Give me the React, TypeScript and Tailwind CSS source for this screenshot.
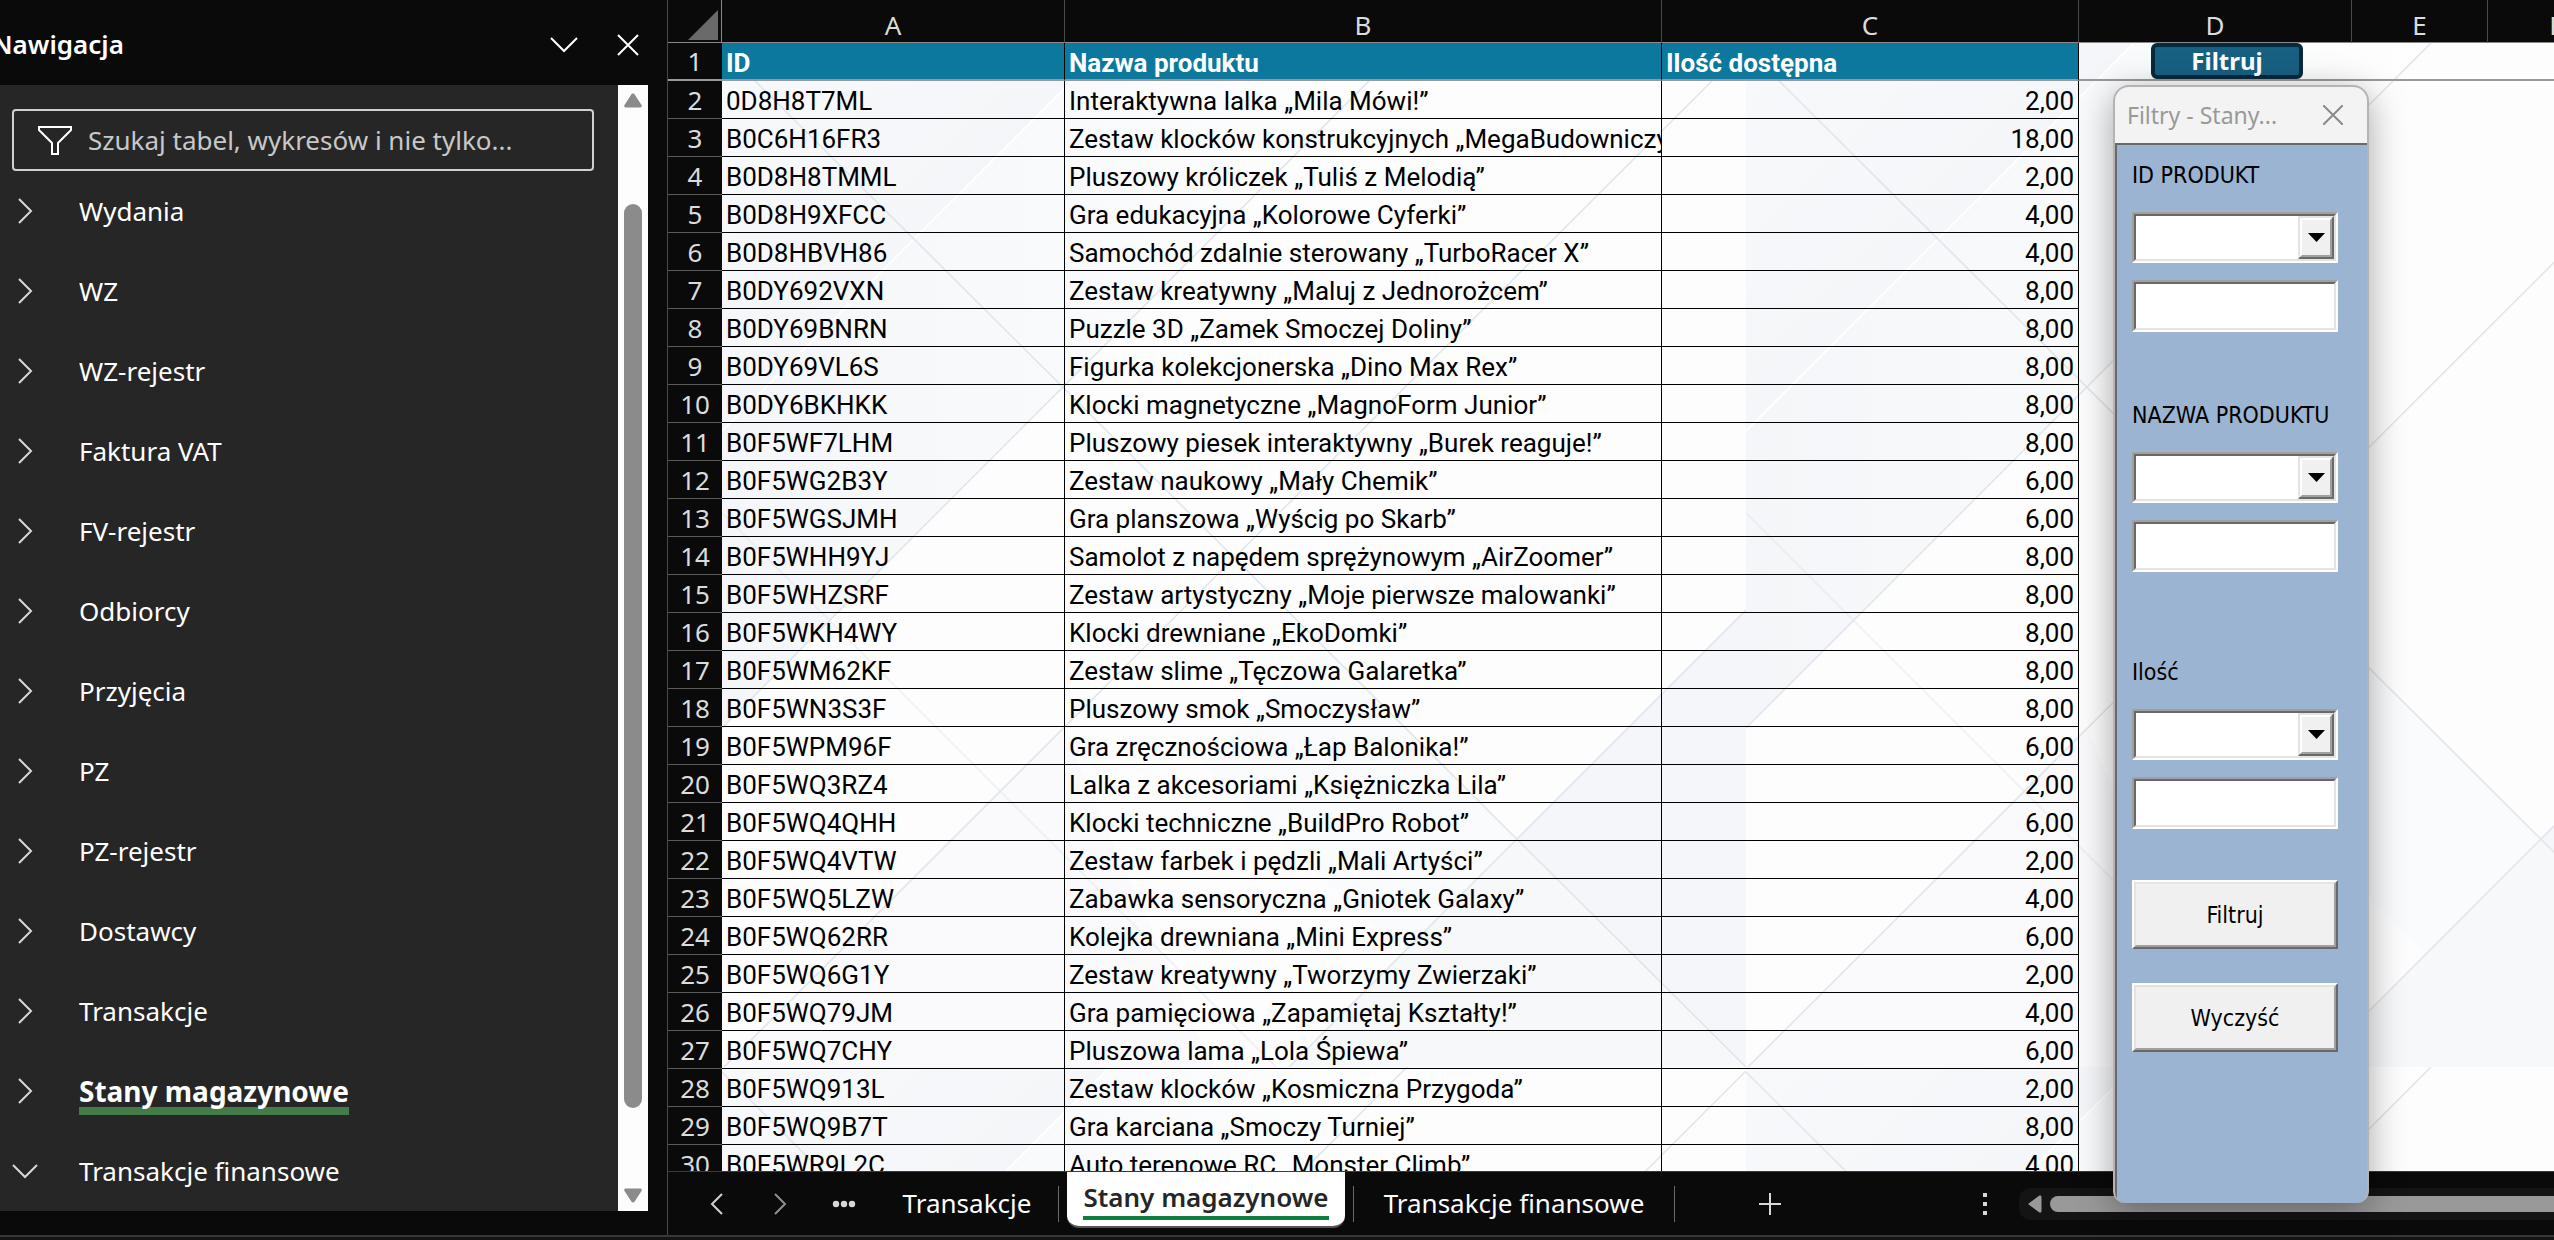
import { useState } from "react";

interface Product {
  id: string;
  name: string;
  qty: string;
}

const NAV_ITEMS = [
  "Wydania",
  "WZ",
  "WZ-rejestr",
  "Faktura VAT",
  "FV-rejestr",
  "Odbiorcy",
  "Przyjęcia",
  "PZ",
  "PZ-rejestr",
  "Dostawcy",
  "Transakcje",
  "Stany magazynowe",
  "Transakcje finansowe",
];

const PRODUCTS: Product[] = [
  { id: "0D8H8T7ML", name: "Interaktywna lalka „Mila Mówi!”", qty: "2,00" },
  { id: "B0C6H16FR3", name: "Zestaw klocków konstrukcyjnych „MegaBudowniczy”", qty: "18,00" },
  { id: "B0D8H8TMML", name: "Pluszowy króliczek „Tuliś z Melodią”", qty: "2,00" },
  { id: "B0D8H9XFCC", name: "Gra edukacyjna „Kolorowe Cyferki”", qty: "4,00" },
  { id: "B0D8HBVH86", name: "Samochód zdalnie sterowany „TurboRacer X”", qty: "4,00" },
  { id: "B0DY692VXN", name: "Zestaw kreatywny „Maluj z Jednorożcem”", qty: "8,00" },
  { id: "B0DY69BNRN", name: "Puzzle 3D „Zamek Smoczej Doliny”", qty: "8,00" },
  { id: "B0DY69VL6S", name: "Figurka kolekcjonerska „Dino Max Rex”", qty: "8,00" },
  { id: "B0DY6BKHKK", name: "Klocki magnetyczne „MagnoForm Junior”", qty: "8,00" },
  { id: "B0F5WF7LHM", name: "Pluszowy piesek interaktywny „Burek reaguje!”", qty: "8,00" },
  { id: "B0F5WG2B3Y", name: "Zestaw naukowy „Mały Chemik”", qty: "6,00" },
  { id: "B0F5WGSJMH", name: "Gra planszowa „Wyścig po Skarb”", qty: "6,00" },
  { id: "B0F5WHH9YJ", name: "Samolot z napędem sprężynowym „AirZoomer”", qty: "8,00" },
  { id: "B0F5WHZSRF", name: "Zestaw artystyczny „Moje pierwsze malowanki”", qty: "8,00" },
  { id: "B0F5WKH4WY", name: "Klocki drewniane „EkoDomki”", qty: "8,00" },
  { id: "B0F5WM62KF", name: "Zestaw slime „Tęczowa Galaretka”", qty: "8,00" },
  { id: "B0F5WN3S3F", name: "Pluszowy smok „Smoczysław”", qty: "8,00" },
  { id: "B0F5WPM96F", name: "Gra zręcznościowa „Łap Balonika!”", qty: "6,00" },
  { id: "B0F5WQ3RZ4", name: "Lalka z akcesoriami „Księżniczka Lila”", qty: "2,00" },
  { id: "B0F5WQ4QHH", name: "Klocki techniczne „BuildPro Robot”", qty: "6,00" },
  { id: "B0F5WQ4VTW", name: "Zestaw farbek i pędzli „Mali Artyści”", qty: "2,00" },
  { id: "B0F5WQ5LZW", name: "Zabawka sensoryczna „Gniotek Galaxy”", qty: "4,00" },
  { id: "B0F5WQ62RR", name: "Kolejka drewniana „Mini Express”", qty: "6,00" },
  { id: "B0F5WQ6G1Y", name: "Zestaw kreatywny „Tworzymy Zwierzaki”", qty: "2,00" },
  { id: "B0F5WQ79JM", name: "Gra pamięciowa „Zapamiętaj Kształty!”", qty: "4,00" },
  { id: "B0F5WQ7CHY", name: "Pluszowa lama „Lola Śpiewa”", qty: "6,00" },
  { id: "B0F5WQ913L", name: "Zestaw klocków „Kosmiczna Przygoda”", qty: "2,00" },
  { id: "B0F5WQ9B7T", name: "Gra karciana „Smoczy Turniej”", qty: "8,00" },
  { id: "B0F5WR9L2C", name: "Auto terenowe RC „Monster Climb”", qty: "4,00" },
];

const COLUMNS = ["A", "B", "C", "D", "E", "F"];

function Chevron({ open = false }: { open?: boolean }) {
  return open ? (
    <svg width="26" height="16" viewBox="0 0 26 16" fill="none" stroke="#d8d8d8" strokeWidth="2">
      <path d="M1 2l12 12L25 2" />
    </svg>
  ) : (
    <svg width="16" height="26" viewBox="0 0 16 26" fill="none" stroke="#d8d8d8" strokeWidth="2">
      <path d="M2 1l12 12L2 25" />
    </svg>
  );
}

function Sidebar() {
  const [selected, setSelected] = useState("Stany magazynowe");

  return (
    <aside className="flex w-[668px] shrink-0 flex-col overflow-hidden pb-6 font-['Noto_Sans',sans-serif] text-white">
      <div className="flex h-[85px] shrink-0 items-center pt-1">
        <h2 className="-ml-2 flex-1 text-[26px] font-semibold">Nawigacja</h2>
        <button type="button" aria-label="Opcje" className="flex w-16 justify-center">
          <svg width="30" height="18" viewBox="0 0 30 18" fill="none" stroke="#fff" strokeWidth="2">
            <path d="M2 2l13 13L28 2" />
          </svg>
        </button>
        <button type="button" aria-label="Zamknij" className="mr-2 flex w-16 justify-center">
          <svg width="22" height="22" viewBox="0 0 22 22" fill="none" stroke="#fff" strokeWidth="2">
            <path d="M1 1l20 20M21 1L1 21" />
          </svg>
        </button>
      </div>

      <div className="mr-5 flex min-h-0 flex-1">
        <div className="flex-1 overflow-hidden bg-[#262626]">
          <label className="mt-6 mr-6 ml-3 flex h-[62px] items-center gap-4 rounded border-2 border-[#d0d0d0] px-6">
            <svg width="34" height="30" viewBox="0 0 34 30" fill="none" stroke="#fff" strokeWidth="2">
              <path d="M1 2h32v3L20 18v11h-6V18L1 5z" />
            </svg>
            <input
              type="text"
              aria-label="Szukaj"
              placeholder="Szukaj tabel, wykresów i nie tylko..."
              className="min-w-0 flex-1 bg-transparent text-[26px] outline-none placeholder:text-[#c8c8c8]"
            />
          </label>
          <nav>
            {NAV_ITEMS.map((item, i) => (
              <button
                key={item}
                type="button"
                onClick={() => setSelected(item)}
                className="flex h-20 w-full items-center gap-[41px] pl-3 text-left text-[26px]"
              >
                <span className="flex w-[26px] justify-center">
                  <Chevron open={i === NAV_ITEMS.length - 1} />
                </span>
                <span
                  className={
                    selected === item
                      ? "border-b-8 border-[#437c48] pt-2 text-[28px] leading-8 font-bold"
                      : "leading-8"
                  }
                >
                  {item}
                </span>
              </button>
            ))}
          </nav>
        </div>

        {/* Pasek przewijania */}
        <div className="flex w-[30px] flex-col items-center bg-[#fdfdfd] py-2">
          <svg width="18" height="15" viewBox="0 0 18 15" fill="#8b8b8b">
            <path d="M9 0.500c1 0 1.600.6 2 1.400L17.500 12c.6 1.300.2 2.500-1.200 2.500H1.700C.3 14.500-.1 13.300.5 12L7 1.900c.4-.8 1-1.400 2-1.400z" />
          </svg>
          <div className="mt-24 mb-20 w-[18px] flex-1 rounded-full bg-[#8b8b8b]" />
          <svg width="18" height="15" viewBox="0 0 18 15" fill="#8b8b8b">
            <path d="M9 14.500c1 0 1.600-.6 2-1.400L17.500 3c.6-1.300.2-2.500-1.200-2.500H1.700C.3.500-.1 1.700.5 3L7 13.100c.4.8 1 1.400 2 1.400z" />
          </svg>
        </div>
      </div>
    </aside>
  );
}

function SheetBackground() {
  return (
    <svg className="absolute inset-0 h-full w-full" aria-hidden="true">
      <defs>
        <linearGradient id="cool" x1="0" y1="0" x2="1" y2="1">
          <stop offset="0" stopColor="#f8f9fb" />
          <stop offset="1" stopColor="#f0f3f7" />
        </linearGradient>
        <linearGradient id="fade" x1="0" y1="0" x2="1" y2="0">
          <stop offset="0" stopColor="#f4f6f9" />
          <stop offset="1" stopColor="#fefefe" />
        </linearGradient>
        <pattern id="tile" x="54" y="43" width="1024" height="1024" patternUnits="userSpaceOnUse">
          <rect width="1024" height="1024" fill="#fdfdfd" />
          <path d="M0 0h388L0 388z" fill="url(#cool)" />
          <path d="M388 0L0 388v297l340-340L685 0z" fill="url(#fade)" />
          <path d="M1024 567v457L795 796z" fill="#f4f6f9" />
          <path d="M795 796l229 228H567z" fill="#f6f8fa" />
          <path d="M600 600l195 196-115 115-200-190z" fill="#fafbfc" />
          <path d="M0 1024l340-340 150 340z" fill="#fafafc" />
          <path d="M388 0L0 388" stroke="#fff" strokeWidth="2" />
          <g stroke="#dfe5ea" strokeWidth="1.500" fill="none">
            <path d="M0 5l1024 1019M0 685L685 0M2 1024L1024 4M567 1024l457-457" />
            <path d="M0 470l554 554" opacity="0.600" />
          </g>
        </pattern>
      </defs>
      <rect width="100%" height="100%" fill="url(#tile)" />
    </svg>
  );
}

function Sheet({ onFilter }: { onFilter: () => void }) {
  return (
    <div className="relative min-h-0 flex-1 overflow-hidden">
      <SheetBackground />
      <table className="relative w-full min-w-[1957px] table-fixed border-separate border-spacing-0 font-['Roboto',sans-serif] text-[26px] leading-8 text-black">
        <colgroup>
          <col className="w-[54px]" />
          <col className="w-[343px]" />
          <col className="w-[597px]" />
          <col className="w-[417px]" />
          <col className="w-[273px]" />
          <col className="w-[136px]" />
          <col />
        </colgroup>
        <thead>
          <tr className="h-[43px] bg-[#0a0a0a] font-['Noto_Sans',sans-serif] text-[#dcdcdc]">
            <th className="border-r border-b border-[#8a8a8a] p-0">
              <svg width="30" height="30" viewBox="0 0 30 30" className="mt-2 ml-5" fill="#6a6a6a">
                <path d="M30 0v30H0z" />
              </svg>
            </th>
            {COLUMNS.map((col) => (
              <th
                key={col}
                scope="col"
                className="border-r border-b border-r-[#4a4a4a] border-b-[#8a8a8a] p-0 pt-2 font-normal"
              >
                {col}
              </th>
            ))}
          </tr>
        </thead>
        <tbody>
          <tr className="h-[38px] text-white">
            <th scope="row" className="border-b-2 border-[#999] bg-[#0a0a0a] p-0 font-['Noto_Sans',sans-serif] font-normal text-[#dcdcdc]">
              1
            </th>
            <td className="border-r border-b-2 border-r-black border-b-[#999] bg-[#0c789e] px-1 pt-1 pb-0 font-bold">ID</td>
            <td className="border-r border-b-2 border-r-black border-b-[#999] bg-[#0c789e] px-1 pt-1 pb-0 font-bold">
              Nazwa produktu
            </td>
            <td className="border-r border-b-2 border-r-black border-b-[#999] bg-[#0c789e] px-1 pt-1 pb-0 font-bold">
              Ilość dostępna
            </td>
            <td className="border-b-2 border-[#999] p-0">
              <button
                type="button"
                onClick={onFilter}
                className="ml-18 block h-9 w-[152px] rounded-md border-4 border-[#05293d] bg-[#176082] font-['Noto_Sans',sans-serif] text-2xl leading-6 font-bold"
              >
                Filtruj
              </button>
            </td>
            <td className="border-b-2 border-[#999] p-0" />
            <td className="border-b-2 border-[#999] p-0" />
          </tr>
          {PRODUCTS.map((product, i) => (
            <tr key={product.id} className="h-[38px]">
              <th scope="row" className="border-b border-[#5a5a5a] bg-[#0a0a0a] p-0 font-['Noto_Sans',sans-serif] font-normal text-[#dcdcdc]">
                {i + 2}
              </th>
              <td className="border-r border-b border-black px-1 pt-0.5 pb-0">{product.id}</td>
              <td className="overflow-hidden border-r border-b border-black px-1 pt-0.5 pb-0 whitespace-nowrap">
                {product.name}
              </td>
              <td className="border-r border-b border-black px-1 pt-0.5 pb-0 text-right">{product.qty}</td>
            </tr>
          ))}
        </tbody>
      </table>
    </div>
  );
}

function SheetTabs() {
  return (
    <div className="flex h-16 shrink-0 items-center overflow-hidden border-t border-[#3a3a3a] font-['Noto_Sans',sans-serif] text-[26px] text-white">
      <button type="button" aria-label="Poprzedni arkusz" className="ml-4 flex w-16 justify-center">
        <svg width="13" height="22" viewBox="0 0 13 22" fill="none" stroke="#d0d0d0" strokeWidth="2">
          <path d="M12 1L2 11l10 10" />
        </svg>
      </button>
      <button type="button" aria-label="Następny arkusz" className="flex w-16 justify-center">
        <svg width="13" height="22" viewBox="0 0 13 22" fill="none" stroke="#909090" strokeWidth="2">
          <path d="M1 1l10 10L1 21" />
        </svg>
      </button>
      <button type="button" aria-label="Wszystkie arkusze" className="flex w-16 justify-center">
        <svg width="24" height="8" viewBox="0 0 24 8" fill="#d8d8d8">
          <circle cx="4" cy="4" r="3.200" />
          <circle cx="12" cy="4" r="3.200" />
          <circle cx="20" cy="4" r="3.200" />
        </svg>
      </button>
      <button type="button" className="w-[182px] text-center">
        Transakcje
      </button>
      <span className="h-9 w-px bg-[#6a6a6a]" />
      <button
        type="button"
        className="mx-2 flex w-[278px] justify-center self-start rounded-b-xl border-b-2 border-[#555] bg-white py-1.5 font-semibold text-[#262626]"
      >
        <span className="border-b-4 border-[#107c41] leading-[38px]">Stany magazynowe</span>
      </button>
      <span className="h-9 w-px bg-[#6a6a6a]" />
      <button type="button" className="w-[320px] text-center">
        Transakcje finansowe
      </button>
      <span className="h-9 w-px bg-[#6a6a6a]" />
      <button type="button" aria-label="Nowy arkusz" className="ml-[84px]">
        <svg width="22" height="22" viewBox="0 0 22 22" stroke="#d8d8d8" strokeWidth="2">
          <path d="M11 0v22M0 11h22" />
        </svg>
      </button>
      <svg width="4" height="22" viewBox="0 0 4 22" fill="#d8d8d8" className="ml-[202px]">
        <path d="M0 0h4v4H0zM0 9h4v4H0zM0 18h4v4H0z" />
      </svg>
      <div className="ml-8 flex h-8 min-w-0 flex-1 items-center gap-2 rounded-l-xl bg-[#141414] pl-2">
        <svg width="15" height="18" viewBox="0 0 15 18" fill="#999">
          <path d="M1 9L12 .8c1.400-.8 2.500-.3 2.500 1.200v14c0 1.500-1.100 2-2.500 1.200z" />
        </svg>
        <div className="h-4 flex-1 rounded-l-full bg-[#999]" />
      </div>
    </div>
  );
}

function FilterField({ id, label }: { id: string; label: string }) {
  return (
    <div>
      <label htmlFor={id} className="block h-[52px] whitespace-nowrap">
        {label}
      </label>
      <div className="relative h-[51px] border-2 border-t-[#a0a0a0] border-r-white border-b-white border-l-[#a0a0a0]">
        <select
          id={id}
          className="block h-full w-full appearance-none border-2 border-t-[#696969] border-r-[#e3e3e3] border-b-[#e3e3e3] border-l-[#696969] bg-white"
        />
        <span className="pointer-events-none absolute inset-y-0.5 right-0.5 flex w-9 border-2 border-t-[#e3e3e3] border-r-[#696969] border-b-[#696969] border-l-[#e3e3e3]">
          <span className="flex flex-1 items-center justify-center border-2 border-t-white border-r-[#a0a0a0] border-b-[#a0a0a0] border-l-white bg-[#f0f0f0]">
            <svg width="17" height="9" viewBox="0 0 17 9">
              <path d="M0 0h17L8.500 9z" />
            </svg>
          </span>
        </span>
      </div>
      <div className="mt-[17px] h-[52px] border-2 border-t-[#a0a0a0] border-r-white border-b-white border-l-[#a0a0a0]">
        <input
          type="text"
          aria-label={`${label} - tekst`}
          className="block h-full w-full border-2 border-t-[#696969] border-r-[#e3e3e3] border-b-[#e3e3e3] border-l-[#696969] bg-white px-1 outline-none"
        />
      </div>
    </div>
  );
}

function FormButton({ children }: { children: string }) {
  return (
    <button
      type="button"
      className="block h-[69px] w-full border-2 border-t-white border-r-[#696969] border-b-[#696969] border-l-white"
    >
      <span className="flex h-full items-center justify-center border-2 border-t-[#e3e3e3] border-r-[#a0a0a0] border-b-[#a0a0a0] border-l-[#e3e3e3] bg-[#f0f0f0]">
        {children}
      </span>
    </button>
  );
}

function FilterWindow({ onClose }: { onClose: () => void }) {
  return (
    <section className="absolute top-[85px] left-[1445px] w-64 overflow-hidden rounded-t-2xl rounded-b-xl border-2 border-b-0 border-[#b4b4b4] bg-[#9ab4d2] shadow-[0_8px_36px_rgba(0,0,0,0.35)]">
      <div className="flex h-14 items-center justify-between bg-[#f3f3f3] pr-6 pl-3 font-['Noto_Sans',sans-serif] text-[23px] text-[#999]">
        <h3>Filtry - Stany...</h3>
        <button type="button" aria-label="Zamknij filtry" onClick={onClose}>
          <svg width="20" height="20" viewBox="0 0 20 20" fill="none" stroke="#8a8a8a" strokeWidth="2">
            <path d="M0 0l20 20M20 0L0 20" />
          </svg>
        </button>
      </div>
      <form
        className="border-t-2 border-l-2 border-[#696969] pt-[15px] pr-[29px] pb-[151px] pl-[15px] font-['DejaVu_Sans_Condensed','DejaVu_Sans',sans-serif] text-[23px] leading-[30px] text-black"
        onSubmit={(e) => e.preventDefault()}
      >
        <div className="flex flex-col gap-[68px]">
          <FilterField id="product-id" label="ID PRODUKT" />
          <FilterField id="product-name" label="NAZWA PRODUKTU" />
        </div>
        <div className="mt-[85px] mb-[51px]">
          <FilterField id="quantity" label="Ilość" />
        </div>
        <div className="flex flex-col gap-[34px]">
          <FormButton>Filtruj</FormButton>
          <FormButton>Wyczyść</FormButton>
        </div>
      </form>
    </section>
  );
}

export default function App() {
  const [filterOpen, setFilterOpen] = useState(true);

  return (
    <div className="flex h-screen flex-col overflow-hidden bg-[#0a0a0a]">
      <div className="flex min-h-0 flex-1">
        <Sidebar />
        <main className="relative flex min-w-0 flex-1 flex-col shadow-[-1px_0_0_#4a4a4a]">
          <Sheet onFilter={() => setFilterOpen(true)} />
          <SheetTabs />
          {filterOpen && <FilterWindow onClose={() => setFilterOpen(false)} />}
        </main>
      </div>
      <div className="h-[5px] shrink-0 border-t-2 border-[#383838] bg-[#141414]" />
    </div>
  );
}
